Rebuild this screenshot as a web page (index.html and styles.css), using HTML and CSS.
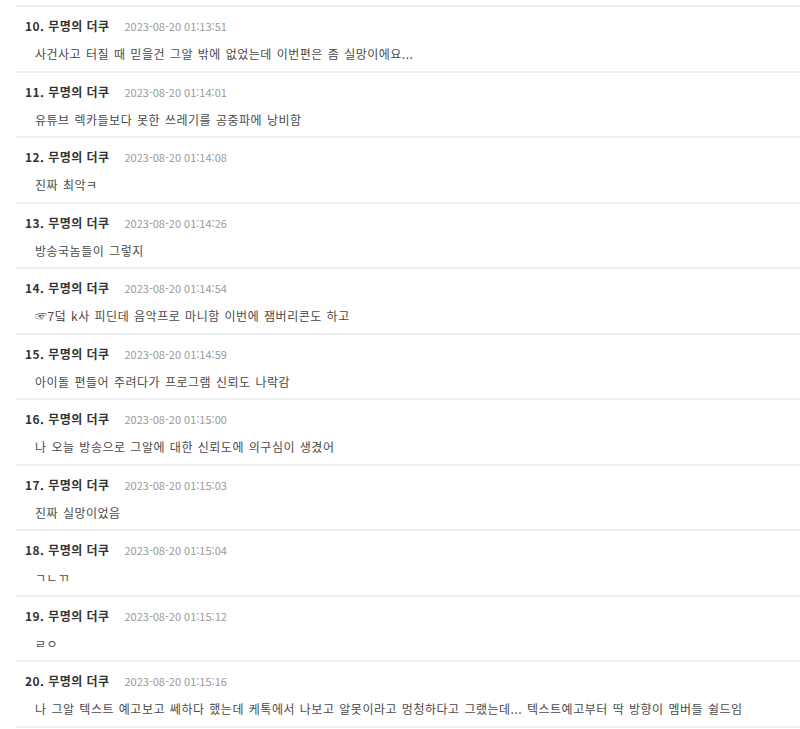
FILE: index.html
```html
<!DOCTYPE html>
<html lang="ko">
<head>
<meta charset="utf-8">
<link rel="stylesheet" href="styles.css">
</head>
<body>
<ul class="comments">
  <li class="comment"><div class="head"><span class="name">10. 무명의 더쿠</span><span class="time">2023-08-20 01:13:51</span></div><div class="body">사건사고 터질 때 믿을건 그알 밖에 없었는데 이번편은 좀 실망이에요...</div></li>
  <li class="comment"><div class="head"><span class="name">11. 무명의 더쿠</span><span class="time">2023-08-20 01:14:01</span></div><div class="body">유튜브 렉카들보다 못한 쓰레기를 공중파에 낭비함</div></li>
  <li class="comment"><div class="head"><span class="name">12. 무명의 더쿠</span><span class="time">2023-08-20 01:14:08</span></div><div class="body">진짜 최악ㅋ</div></li>
  <li class="comment"><div class="head"><span class="name">13. 무명의 더쿠</span><span class="time">2023-08-20 01:14:26</span></div><div class="body">방송국놈들이 그렇지</div></li>
  <li class="comment"><div class="head"><span class="name">14. 무명의 더쿠</span><span class="time">2023-08-20 01:14:54</span></div><div class="body">☞7덬 k사 피딘데 음악프로 마니함 이번에 잼버리콘도 하고</div></li>
  <li class="comment"><div class="head"><span class="name">15. 무명의 더쿠</span><span class="time">2023-08-20 01:14:59</span></div><div class="body">아이돌 편들어 주려다가 프로그램 신뢰도 나락감</div></li>
  <li class="comment"><div class="head"><span class="name">16. 무명의 더쿠</span><span class="time">2023-08-20 01:15:00</span></div><div class="body">나 오늘 방송으로 그알에 대한 신뢰도에 의구심이 생겼어</div></li>
  <li class="comment"><div class="head"><span class="name">17. 무명의 더쿠</span><span class="time">2023-08-20 01:15:03</span></div><div class="body">진짜 실망이었음</div></li>
  <li class="comment"><div class="head"><span class="name">18. 무명의 더쿠</span><span class="time">2023-08-20 01:15:04</span></div><div class="body">ㄱㄴㄲ</div></li>
  <li class="comment"><div class="head"><span class="name">19. 무명의 더쿠</span><span class="time">2023-08-20 01:15:12</span></div><div class="body">ㄹㅇ</div></li>
  <li class="comment"><div class="head"><span class="name">20. 무명의 더쿠</span><span class="time">2023-08-20 01:15:16</span></div><div class="body">나 그알 텍스트 예고보고 쎄하다 했는데 케톡에서 나보고 알못이라고 멍청하다고 그랬는데... 텍스트예고부터 딱 방향이 멤버들 쉴드임</div></li>
</ul>
</body>
</html>
```

FILE: styles.css
```css
html, body {
  margin: 0;
  padding: 0;
  background: #ffffff;
}

body {
  font-family: "Noto Sans CJK KR", "Noto Sans", sans-serif;
  overflow: hidden;
}

.comments {
  list-style: none;
  margin: 0;
  padding: 5px 0 0 16px;
}

.comment {
  border-top: 2px solid #efefef;
  padding: 10px 0 7.5px 9px;
}

.comment:last-child {
  border-bottom: 2px solid #efefef;
}

.head {
  display: flex;
  align-items: baseline;
  gap: 15px;
  height: 18px;
  line-height: 18px;
}

.name {
  font-size: 12px;
  font-weight: 700;
  letter-spacing: 0.45px;
  color: #333333;
}

.time {
  font-size: 11px;
  color: #9a9a9a;
}

.body {
  margin-top: 10px;
  padding-left: 10px;
  font-size: 12px;
  line-height: 18px;
  letter-spacing: 0.5px;
  word-spacing: 1px;
  color: #4a4a4a;
  white-space: nowrap;
}
```
